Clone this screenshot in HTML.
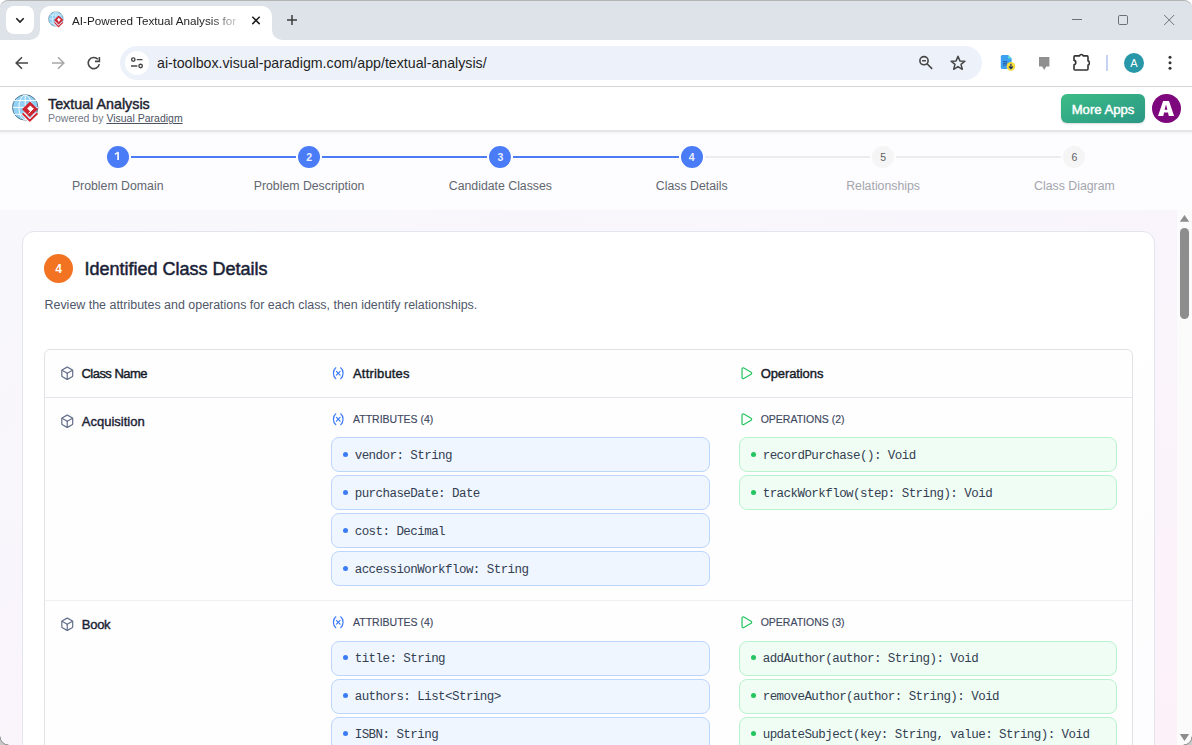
<!DOCTYPE html>
<html><head><meta charset="utf-8">
<style>
*{box-sizing:border-box;margin:0;padding:0}
html,body{width:1192px;height:745px;overflow:hidden;background:#fff;font-family:"Liberation Sans",sans-serif}
.abs{position:absolute}
.tx{position:absolute;white-space:nowrap;line-height:20px}
#tabbar{left:0;top:0;width:1192px;height:40px;background:#dee3ea;border-top:1px solid #b5b5b4;border-radius:8px 8px 0 0}
#toolbar{left:0;top:40px;width:1192px;height:47px;background:#fff;border-bottom:1px solid #d6d6d6}
#omni{left:120px;top:46px;width:862px;height:34px;border-radius:17px;background:#edf2fa}
#hdr{left:0;top:87px;width:1192px;height:44px;background:#fff;box-shadow:0 1px 2px rgba(0,0,0,.10)}
#stepper{left:0;top:131px;width:1192px;height:79px;background:#fdfcfe}
#pagebg{left:0;top:210px;width:1177px;height:535px;background:linear-gradient(160deg,#f8f8fc 0%,#f9f5fc 40%,#fcf1f9 100%)}
#card{left:22px;top:231px;width:1133px;height:600px;background:linear-gradient(160deg,#fff 40%,#fdfcfe);border:1px solid #e2e5ee;border-radius:12px}
#table{left:44px;top:349px;width:1089px;height:500px;border:1px solid #e1e2e6;border-radius:6px;background:#fefeff}
.item{position:absolute;height:35px;border-radius:8px;font-family:"Liberation Mono",monospace;font-size:12.5px;letter-spacing:-0.55px;color:#334052;line-height:32px;padding-top:1.5px;padding-left:22.7px;white-space:nowrap}
.attr{background:#eff6ff;border:1px solid #bcd6fb;left:331px;width:379px}
.op{background:#f0fdf4;border:1px solid #b9f3cd;left:739px;width:378px}
.item:before{content:"";position:absolute;left:11px;top:14px;width:5.2px;height:5.2px;border-radius:50%}
.attr:before{background:#3b7cf6}
.r2:before{top:13.2px}
.op:before{background:#22c55e}
.step{position:absolute;width:22px;height:22px;border-radius:50%;font-size:10.5px;text-align:center;line-height:22px;top:145.5px;font-weight:bold}
.done{background:#4a7cf7;color:#e8eeff}
.todo{background:#f5f5f6;color:#616161;font-weight:normal}
.slab{position:absolute;font-size:12.3px;text-align:center;width:200px;line-height:20px;top:176.2px;color:#62676f;white-space:nowrap}
.slab.t{color:#a3a6ad}
.line{position:absolute;top:156px;height:2px}
.t1{position:absolute;font-size:13px;color:#141a26;-webkit-text-stroke:0.4px #141a26;line-height:20px;white-space:nowrap}
.sec{position:absolute;font-size:10.5px;color:#3e4860;-webkit-text-stroke:0.15px #3e4860;line-height:20px;white-space:nowrap}
.ic{position:absolute;width:16px;height:16px}
</style></head><body>
<div id="tabbar" class="abs"></div>
<div id="toolbar" class="abs"></div>
<div id="omni" class="abs"></div>
<div id="hdr" class="abs"></div>
<div id="stepper" class="abs"></div>
<div id="pagebg" class="abs"></div>
<div class="abs" style="left:0;top:130px;width:1192px;height:2px;background:#e4e5e9"></div>
<div class="abs" style="left:0;top:132px;width:1192px;height:3px;background:linear-gradient(#f3f3f5,#fcfcfd)"></div>
<div id="card" class="abs"></div>
<div id="table" class="abs"></div>

<!-- TABS -->
<div class="abs" style="left:6px;top:6px;width:28px;height:28px;background:#fff;border-radius:8px"></div>
<svg class="abs" style="left:14px;top:14px" width="12" height="12" viewBox="0 0 12 12"><path d="M2.3 4.3 L6 8 L9.7 4.3" fill="none" stroke="#1f1f1f" stroke-width="1.6"/></svg>
<div class="abs" style="left:40px;top:6px;width:232px;height:34px;background:#fff;border-radius:10px 10px 0 0"></div>
<svg class="abs" style="left:30px;top:30px" width="10" height="10"><path d="M0 10 A10 10 0 0 0 10 0 L10 10 Z" fill="#fff"/></svg>
<svg class="abs" style="left:272px;top:30px" width="10" height="10"><path d="M10 10 A10 10 0 0 1 0 0 L0 10 Z" fill="#fff"/></svg>
<svg class="abs" style="left:45.5px;top:9.4px" width="20.7" height="20.7" viewBox="0 0 36 36"><circle cx="17.2" cy="17.4" r="12.7" fill="#93d1f4" stroke="#557a8e" stroke-width="1"/><path d="M6 10.5 H28.5 M4.8 17.4 H29.8 M6 24.3 H28.5 M17.2 4.9 V29.9" stroke="#f4fbff" stroke-width="1"/><ellipse cx="17.2" cy="17.4" rx="6.3" ry="12.5" fill="none" stroke="#f4fbff" stroke-width="1"/><path d="M22 11.5 L30 19.3 L21.8 27 L14 19.3 Z" fill="#cf2530"/><path d="M22.3 15.4 L25.5 18.5 L22.3 21.6 L19.1 18.5 Z" fill="#fff"/><path d="M25.5 18.5 L20.5 23.4" stroke="#fff" stroke-width="1"/><path d="M14.6 23.4 L21.8 30.6 L29.4 23.2" fill="none" stroke="#fff" stroke-width="3.4"/><path d="M14.6 23.4 L21.8 30.6 L29.4 23.2" fill="none" stroke="#cf2530" stroke-width="2"/></svg>
<div class="tx" style="left:72px;top:11px;font-size:11.7px;color:#1f1f1f;width:172px;overflow:hidden;-webkit-mask-image:linear-gradient(90deg,#000 80%,transparent 100%)">AI-Powered Textual Analysis for</div>
<svg class="abs" style="left:250px;top:14px" width="12" height="13" viewBox="0 0 12 13"><path d="M2.3 2.7 L9.7 10.1 M9.7 2.7 L2.3 10.1" stroke="#1f1f1f" stroke-width="1.5"/></svg>
<svg class="abs" style="left:286px;top:14px" width="12" height="12" viewBox="0 0 12 12"><path d="M6 1 V11 M1 6 H11" stroke="#3c3c3c" stroke-width="1.5"/></svg>
<svg class="abs" style="left:1070px;top:12px" width="16" height="16"><path d="M2 7.5 H12" stroke="#6d7075" stroke-width="1"/></svg>
<svg class="abs" style="left:1116px;top:12px" width="16" height="16"><rect x="2.5" y="3.5" width="9" height="9" rx="1.3" fill="none" stroke="#6d7075" stroke-width="1"/></svg>
<svg class="abs" style="left:1162px;top:12px" width="16" height="16"><path d="M2.2 3 L12.2 13 M12.2 3 L2.2 13" stroke="#6d7075" stroke-width="1"/></svg>

<!-- TOOLBAR -->
<svg class="abs" style="left:13px;top:54px" width="18" height="18" viewBox="0 0 18 18"><path d="M15 9 H3.6 M9 3.2 L3.2 9 L9 14.8" fill="none" stroke="#474747" stroke-width="1.6"/></svg>
<svg class="abs" style="left:49px;top:54px" width="18" height="18" viewBox="0 0 18 18"><path d="M3 9 H14.4 M9 3.2 L14.8 9 L9 14.8" fill="none" stroke="#a8a8a8" stroke-width="1.6"/></svg>
<svg class="abs" style="left:85px;top:54px" width="18" height="18" viewBox="0 0 18 18"><path d="M14.3 10.2 A5.6 5.6 0 1 1 12.9 5.2" fill="none" stroke="#474747" stroke-width="1.6"/><path d="M14.4 3 V7.4 H10" fill="none" stroke="#474747" stroke-width="1.6"/></svg>
<div class="abs" style="left:125px;top:51px;width:24px;height:24px;border-radius:12px;background:#fff"></div>
<svg class="abs" style="left:129px;top:55px" width="16" height="16" viewBox="0 0 16 16"><circle cx="4.3" cy="4.6" r="1.7" fill="none" stroke="#474747" stroke-width="1.4"/><path d="M7.8 4.6 H13.5 M2 11 H8.3" stroke="#474747" stroke-width="1.4"/><circle cx="11.6" cy="11" r="1.7" fill="none" stroke="#474747" stroke-width="1.4"/></svg>
<div class="tx" style="left:157px;top:52.8px;font-size:14.2px;color:#1f1f1f">ai-toolbox.visual-paradigm.com/app/textual-analysis/</div>
<svg class="abs" style="left:916px;top:53px" width="18" height="18" viewBox="0 0 18 18"><circle cx="8" cy="7.7" r="4.1" fill="none" stroke="#474747" stroke-width="1.6"/><path d="M11 10.7 L16.2 15.9 M6.1 7.7 H9.9" stroke="#474747" stroke-width="1.6"/></svg>
<svg class="abs" style="left:949px;top:54px" width="18" height="18" viewBox="0 0 18 18"><path d="M9 2.2 L10.9 6.9 L15.9 7.2 L12 10.4 L13.3 15.3 L9 12.6 L4.7 15.3 L6 10.4 L2.1 7.2 L7.1 6.9 Z" fill="none" stroke="#474747" stroke-width="1.5" stroke-linejoin="round"/></svg>
<svg class="abs" style="left:998px;top:54px" width="20" height="18" viewBox="0 0 20 18"><path d="M4.3 1 H10.2 L13.6 4.4 V13.4 Q13.6 14.9 12.1 14.9 H4.3 Q2.8 14.9 2.8 13.4 V2.5 Q2.8 1 4.3 1 Z" fill="#3ba0f0"/><path d="M10.2 1 L13.6 4.4 H10.2 Z" fill="#5fe6cf"/><path d="M5 7.6 H9.2 M5 9.3 H9.2 M5 11.1 H9.2" stroke="#2a5ba6" stroke-width="1"/><circle cx="12.9" cy="12.4" r="4.3" fill="#f6dc3a"/><path d="M12.9 9.8 V14.6 M10.9 12.5 L12.9 14.6 L14.9 12.5" fill="none" stroke="#1f3460" stroke-width="1.2"/></svg>
<svg class="abs" style="left:1035px;top:54px" width="18" height="18" viewBox="0 0 18 18"><path d="M4 3 H14.4 V12.6 H11.2 L9.2 15.9 L7.2 12.6 H4 Z" fill="#8f8f8f"/></svg>
<svg class="abs" style="left:1071.5px;top:52.6px" width="18" height="18" viewBox="0 0 18 18"><path d="M3 2.9 H7.6 C7.8 1.1 11 1.1 11.2 2.9 H15 Q16 2.9 16 3.9 V7.9 C17.8 8.1 17.8 11.9 16 12.1 V16 Q16 17 15 17 H3 Q2 17 2 16 V11.7 C4.4 11.5 4.4 7.6 2 7.4 V3.9 Q2 2.9 3 2.9 Z" fill="none" stroke="#333" stroke-width="1.6" stroke-linejoin="round"/></svg>
<div class="abs" style="left:1106px;top:55px;width:1.5px;height:16px;background:#c6d4f2"></div>
<div class="abs" style="left:1124px;top:53px;width:20px;height:20px;border-radius:50%;background:#2898a8;color:#fff;font-size:11px;text-align:center;line-height:20px">A</div>
<svg class="abs" style="left:1161px;top:54px" width="18" height="18" viewBox="0 0 18 18"><circle cx="9" cy="3.3" r="1.5" fill="#333"/><circle cx="9" cy="8.8" r="1.5" fill="#333"/><circle cx="9" cy="14.2" r="1.5" fill="#333"/></svg>

<!-- HEADER -->
<svg class="abs" style="left:8px;top:90px" width="36" height="36" viewBox="0 0 36 36"><circle cx="17.2" cy="17.4" r="12.7" fill="#93d1f4" stroke="#557a8e" stroke-width="1"/><path d="M6 10.5 H28.5 M4.8 17.4 H29.8 M6 24.3 H28.5 M17.2 4.9 V29.9" stroke="#f4fbff" stroke-width="1"/><ellipse cx="17.2" cy="17.4" rx="6.3" ry="12.5" fill="none" stroke="#f4fbff" stroke-width="1"/><path d="M22 11.5 L30 19.3 L21.8 27 L14 19.3 Z" fill="#cf2530"/><path d="M22.3 15.4 L25.5 18.5 L22.3 21.6 L19.1 18.5 Z" fill="#fff"/><path d="M25.5 18.5 L20.5 23.4" stroke="#fff" stroke-width="1"/><path d="M14.6 23.4 L21.8 30.6 L29.4 23.2" fill="none" stroke="#fff" stroke-width="3.4"/><path d="M14.6 23.4 L21.8 30.6 L29.4 23.2" fill="none" stroke="#cf2530" stroke-width="2"/></svg>
<div class="tx" style="left:48px;top:93.8px;font-size:14.3px;color:#1e2330;-webkit-text-stroke:0.45px #1e2330">Textual Analysis</div>
<div class="tx" style="left:48px;top:108.4px;font-size:10.5px;color:#737a86">Powered by <span style="text-decoration:underline;color:#4b5262">Visual Paradigm</span></div>
<div class="abs" style="left:1061px;top:94px;width:84px;height:29px;border-radius:6px;background:linear-gradient(160deg,#3cbc86,#2a9785);box-shadow:0 1px 2px rgba(0,0,0,.15)"></div>
<div class="tx" style="left:1061px;width:84px;text-align:center;top:99.5px;font-size:13.1px;color:#fff;-webkit-text-stroke:0.45px #fff">More Apps</div>
<div class="abs" style="left:1152px;top:94px;width:29px;height:29px;border-radius:50%;background:#7d077d"></div>
<svg class="abs" style="left:1152px;top:94px" width="29" height="29" viewBox="0 0 29 29"><path fill-rule="evenodd" d="M6.05 21.9 L11.1 7 H17 L22.1 21.9 H16.8 L16 18.6 H12.1 L11.3 21.9 Z M12.6 15.8 H15.4 L14 10.6 Z" fill="#fff"/></svg>

<!-- STEPPER -->
<div class="line" style="left:130.70px;width:165.35px;background:#4b7bf5"></div>
<div class="line" style="left:322.05px;width:165.35px;background:#4b7bf5"></div>
<div class="line" style="left:513.40px;width:165.35px;background:#4b7bf5"></div>
<div class="line" style="left:704.75px;width:165.35px;background:#ececee"></div>
<div class="line" style="left:896.10px;width:165.35px;background:#ececee"></div>
<div class="step done" style="left:106.70px"></div>
<svg class="abs" style="left:112px;top:149px" width="10" height="14"><path d="M6.1 3.2 V11" stroke="#eef2ff" stroke-width="1.8"/><path d="M2.9 5.3 L6.3 3.1" stroke="#eef2ff" stroke-width="1.5"/></svg>
<div class="step done" style="left:298.05px">2</div>
<div class="step done" style="left:489.40px">3</div>
<div class="step done" style="left:680.75px">4</div>
<div class="step todo" style="left:872.10px">5</div>
<div class="step todo" style="left:1063.45px">6</div>
<div class="slab" style="left:17.70px">Problem Domain</div>
<div class="slab" style="left:209.05px">Problem Description</div>
<div class="slab" style="left:400.40px">Candidate Classes</div>
<div class="slab" style="left:591.75px">Class Details</div>
<div class="slab t" style="left:783.10px">Relationships</div>
<div class="slab t" style="left:974.45px">Class Diagram</div>

<!-- CARD HEAD -->
<div class="abs" style="left:44px;top:254px;width:29px;height:29px;border-radius:50%;background:#f27321"></div>
<div class="tx" style="left:44px;width:29px;text-align:center;top:258.7px;font-size:12px;font-weight:bold;color:#fff">4</div>
<div class="tx" style="left:84.5px;top:259px;font-size:18px;color:#1a1f36;-webkit-text-stroke:0.5px #1a1f36">Identified Class Details</div>
<div class="tx" style="left:44.5px;top:294.6px;font-size:12.45px;color:#4f576a">Review the attributes and operations for each class, then identify relationships.</div>

<!-- TABLE -->
<div class="abs" style="left:45px;top:397px;width:1087px;height:1px;background:#e3e6ee"></div>
<div class="abs" style="left:45px;top:600px;width:1087px;height:1px;background:#eef1f4"></div>

<svg class="ic" style="left:59.8px;top:365.7px;width:14.5px;height:14.5px" viewBox="0 0 24 24" fill="none" stroke="#64708a" stroke-width="2" stroke-linecap="round" stroke-linejoin="round"><path d="M21 8a2 2 0 0 0-1-1.73l-7-4a2 2 0 0 0-2 0l-7 4A2 2 0 0 0 3 8v8a2 2 0 0 0 1 1.73l7 4a2 2 0 0 0 2 0l7-4A2 2 0 0 0 21 16Z"/><path d="m3.3 7 8.7 5 8.7-5"/><path d="M12 22V12"/></svg>
<div class="t1" style="left:81.5px;top:364.1px;letter-spacing:-0.54px">Class Name</div>
<svg class="ic" style="left:330.7px;top:365.8px;width:14.5px;height:14.5px" viewBox="0 0 24 24" fill="none" stroke="#3b7cf6" stroke-width="2" stroke-linecap="round" stroke-linejoin="round"><path d="M8 21s-4-3-4-9 4-9 4-9"/><path d="M16 3s4 3 4 9-4 9-4 9"/><line x1="15" x2="9" y1="9" y2="15"/><line x1="9" x2="15" y1="9" y2="15"/></svg>
<div class="t1" style="left:353px;top:364.1px;letter-spacing:0.18px">Attributes</div>
<svg class="ic" style="left:738.6px;top:365.8px;width:14.5px;height:14.5px" viewBox="0 0 24 24" fill="none" stroke="#22c55e" stroke-width="2" stroke-linecap="round" stroke-linejoin="round"><path d="M5 5a2 2 0 0 1 3.008-1.728l11.997 6.998a2 2 0 0 1 .003 3.458l-12 7A2 2 0 0 1 5 19z"/></svg>
<div class="t1" style="left:760.7px;top:364.1px;letter-spacing:-0.1px">Operations</div>

<!-- row 1 -->
<svg class="ic" style="left:59.8px;top:413.8px;width:14.5px;height:14.5px" viewBox="0 0 24 24" fill="none" stroke="#64708a" stroke-width="2" stroke-linecap="round" stroke-linejoin="round"><path d="M21 8a2 2 0 0 0-1-1.73l-7-4a2 2 0 0 0-2 0l-7 4A2 2 0 0 0 3 8v8a2 2 0 0 0 1 1.73l7 4a2 2 0 0 0 2 0l7-4A2 2 0 0 0 21 16Z"/><path d="m3.3 7 8.7 5 8.7-5"/><path d="M12 22V12"/></svg>
<div class="t1" style="left:81.8px;top:412px;color:#1b2234;-webkit-text-stroke-color:#1b2234">Acquisition</div>
<svg class="ic" style="left:330.7px;top:412.0px;width:14.5px;height:14.5px" viewBox="0 0 24 24" fill="none" stroke="#3b7cf6" stroke-width="2" stroke-linecap="round" stroke-linejoin="round"><path d="M8 21s-4-3-4-9 4-9 4-9"/><path d="M16 3s4 3 4 9-4 9-4 9"/><line x1="15" x2="9" y1="9" y2="15"/><line x1="9" x2="15" y1="9" y2="15"/></svg>
<div class="sec" style="left:353px;top:409.2px">ATTRIBUTES (4)</div>
<svg class="ic" style="left:738.6px;top:412.0px;width:14.5px;height:14.5px" viewBox="0 0 24 24" fill="none" stroke="#22c55e" stroke-width="2" stroke-linecap="round" stroke-linejoin="round"><path d="M5 5a2 2 0 0 1 3.008-1.728l11.997 6.998a2 2 0 0 1 .003 3.458l-12 7A2 2 0 0 1 5 19z"/></svg>
<div class="sec" style="left:760.7px;top:409.2px">OPERATIONS (2)</div>
<div class="item attr" style="top:437px">vendor: String</div>
<div class="item attr" style="top:475px">purchaseDate: Date</div>
<div class="item attr" style="top:513px">cost: Decimal</div>
<div class="item attr" style="top:551px">accessionWorkflow: String</div>
<div class="item op" style="top:437px">recordPurchase(): Void</div>
<div class="item op" style="top:475px">trackWorkflow(step: String): Void</div>

<!-- row 2 -->
<svg class="ic" style="left:59.8px;top:616.8px;width:14.5px;height:14.5px" viewBox="0 0 24 24" fill="none" stroke="#64708a" stroke-width="2" stroke-linecap="round" stroke-linejoin="round"><path d="M21 8a2 2 0 0 0-1-1.73l-7-4a2 2 0 0 0-2 0l-7 4A2 2 0 0 0 3 8v8a2 2 0 0 0 1 1.73l7 4a2 2 0 0 0 2 0l7-4A2 2 0 0 0 21 16Z"/><path d="m3.3 7 8.7 5 8.7-5"/><path d="M12 22V12"/></svg>
<div class="t1" style="left:81.8px;top:615px;color:#1b2234;-webkit-text-stroke-color:#1b2234;letter-spacing:-0.27px">Book</div>
<svg class="ic" style="left:330.7px;top:615.0px;width:14.5px;height:14.5px" viewBox="0 0 24 24" fill="none" stroke="#3b7cf6" stroke-width="2" stroke-linecap="round" stroke-linejoin="round"><path d="M8 21s-4-3-4-9 4-9 4-9"/><path d="M16 3s4 3 4 9-4 9-4 9"/><line x1="15" x2="9" y1="9" y2="15"/><line x1="9" x2="15" y1="9" y2="15"/></svg>
<div class="sec" style="left:353px;top:612.3px">ATTRIBUTES (4)</div>
<svg class="ic" style="left:738.6px;top:615.0px;width:14.5px;height:14.5px" viewBox="0 0 24 24" fill="none" stroke="#22c55e" stroke-width="2" stroke-linecap="round" stroke-linejoin="round"><path d="M5 5a2 2 0 0 1 3.008-1.728l11.997 6.998a2 2 0 0 1 .003 3.458l-12 7A2 2 0 0 1 5 19z"/></svg>
<div class="sec" style="left:760.7px;top:612.3px">OPERATIONS (3)</div>
<div class="item attr r2" style="top:641px;padding-top:0.6px">title: String</div>
<div class="item attr r2" style="top:679px;padding-top:0.6px">authors: List&lt;String&gt;</div>
<div class="item attr r2" style="top:717px;padding-top:0.6px">ISBN: String</div>
<div class="item op r2" style="top:641px;padding-top:0.6px">addAuthor(author: String): Void</div>
<div class="item op r2" style="top:679px;padding-top:0.6px">removeAuthor(author: String): Void</div>
<div class="item op r2" style="top:717px;padding-top:0.6px">updateSubject(key: String, value: String): Void</div>

<!-- SCROLLBAR -->
<div class="abs" style="left:1177px;top:210px;width:15px;height:535px;background:#fbfbfb"></div>
<svg class="abs" style="left:1177px;top:212px" width="15" height="12"><path d="M2.8 9.7 L7.5 3 L12.2 9.7 Z" fill="#8d8d8d"/></svg>
<div class="abs" style="left:1180px;top:228px;width:9px;height:91px;border-radius:4.5px;background:#8d8d8d"></div>
<svg class="abs" style="left:1177px;top:732px" width="15" height="12"><path d="M2.8 2 L7.5 9 L12.2 2 Z" fill="#8d8d8d"/></svg>
<svg class="abs" style="left:0;top:735px" width="10" height="10"><path d="M0 1.5 A8.5 8.5 0 0 0 8.5 10 L0 10 Z" fill="#c9c9c9"/><path d="M0 1.5 A8.5 8.5 0 0 0 8.5 10" fill="none" stroke="#8a8a8a" stroke-width="1"/></svg>
<svg class="abs" style="left:1182px;top:735px" width="10" height="10"><path d="M10 1.5 A8.5 8.5 0 0 1 1.5 10 L10 10 Z" fill="#c9c9c9"/><path d="M10 1.5 A8.5 8.5 0 0 1 1.5 10" fill="none" stroke="#8a8a8a" stroke-width="1"/></svg>
</body></html>
